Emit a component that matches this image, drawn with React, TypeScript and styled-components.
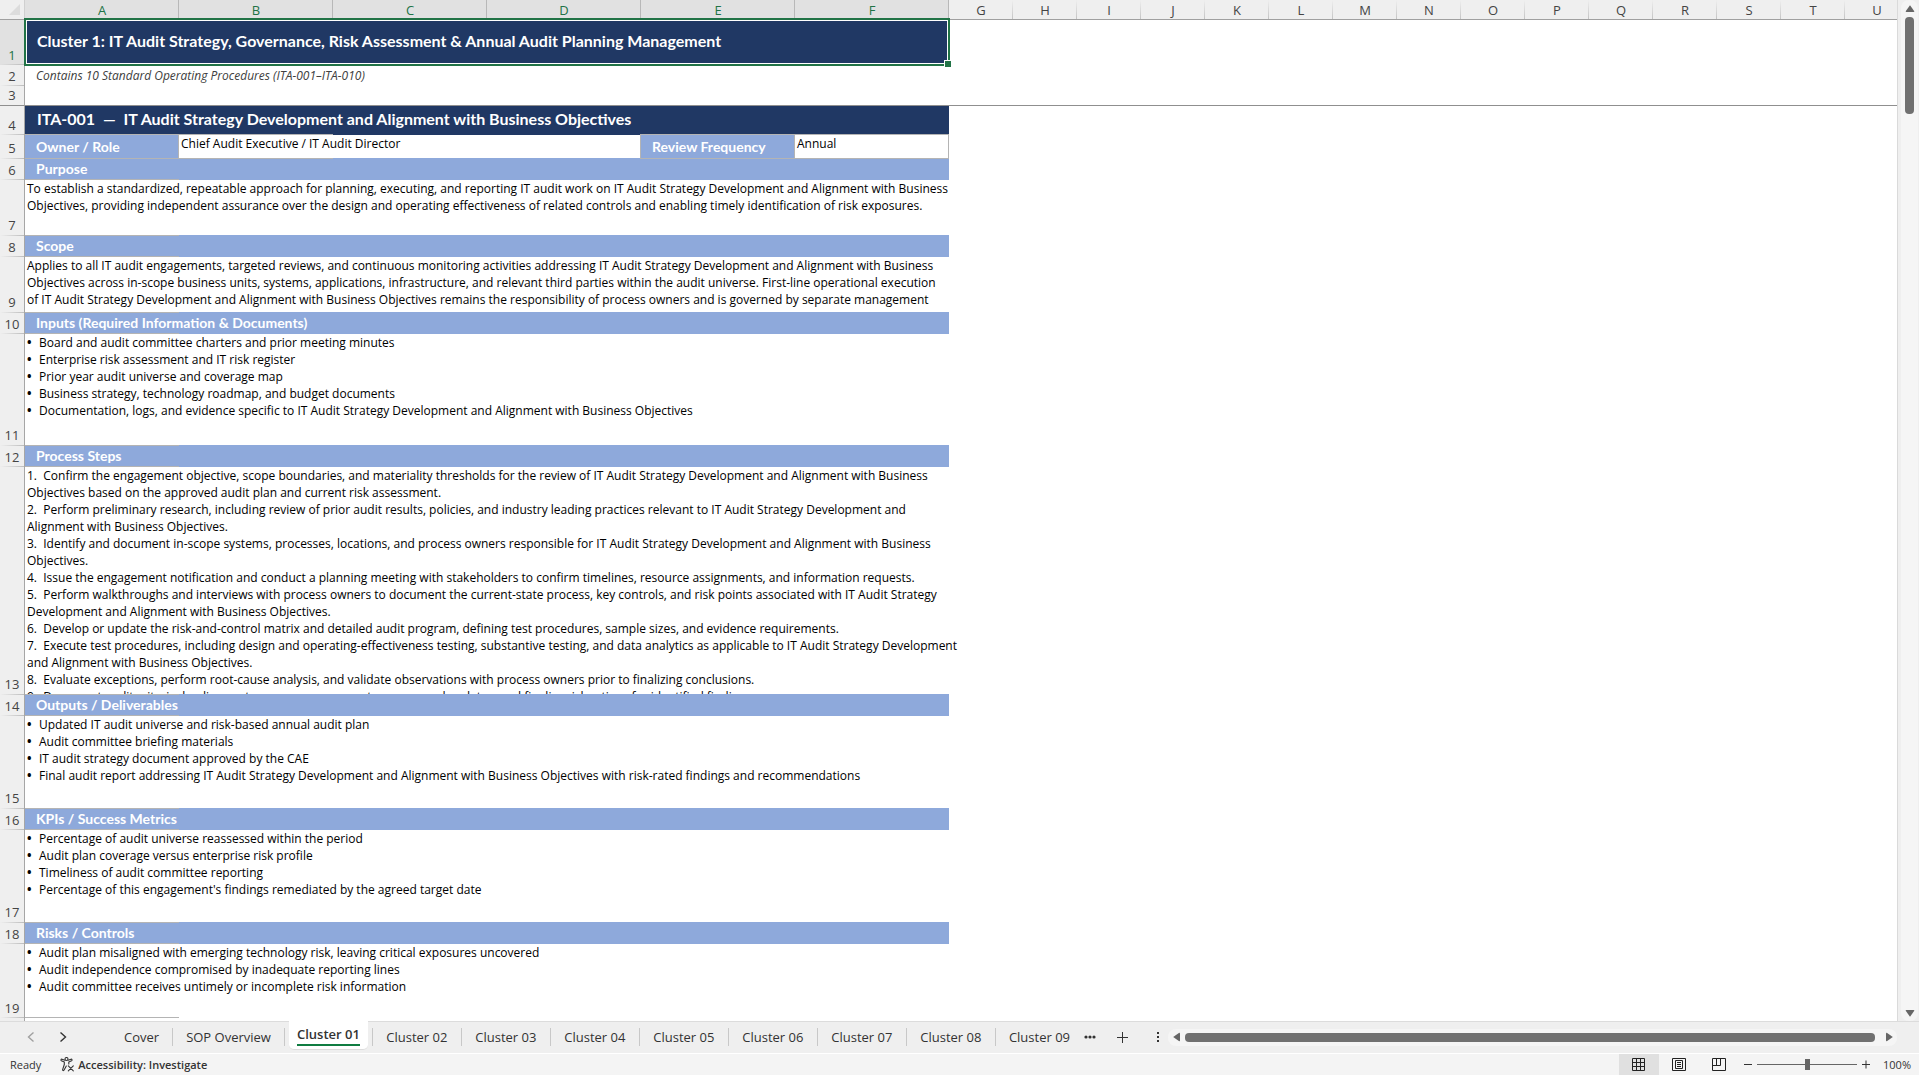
import React, { useState } from 'react';
import styled, { createGlobalStyle, css } from 'styled-components';

const NAVY = '#203864';
const BLUE = '#8ea9db';
const LINE = '#b4b4b4';
const CHROME = '#efefef';
const GREEN = '#217346';
const HEADING_FONT = 'Lato, "Open Sans", sans-serif';
const BODY_FONT = '"Open Sans", "Noto Sans", sans-serif';

const Global = createGlobalStyle`
  * { box-sizing: border-box; }
  body { margin: 0; background: ${CHROME}; font-family: ${BODY_FONT}; overflow: hidden; }
  button { border: 0; margin: 0; padding: 0; background: none; font: inherit; color: inherit; cursor: pointer; }
`;

const Window = styled.div`
  display: flex;
  flex-direction: column;
  height: 100vh;
`;

const Workspace = styled.main`
  display: flex;
  flex: 1;
  min-height: 0;
`;

const SheetView = styled.div`
  flex: 1;
  min-width: 0;
  overflow: hidden;
  background: #fff;
`;

/* ---------- grid ---------- */

const Grid = styled.table`
  width: 1909px;
  table-layout: fixed;
  border-collapse: separate;
  border-spacing: 0;
  font-size: 12px;
  line-height: 17px;
  color: #000;
  th, td { padding: 0; }
`;

const Col = styled.col<{ $w: number }>`
  width: ${(p) => p.$w}px;
`;

const Row = styled.tr<{ $h: number }>`
  height: ${(p) => p.$h}px;
`;

const Corner = styled.td`
  height: 20px;
  background: ${CHROME};
  border-right: 1px solid #d0d0d0;
  border-bottom: 1px solid #a0a0a0;
  svg { display: block; margin-left: 9px; }
`;

const ColHead = styled.th<{ $on: boolean }>`
  height: 20px;
  padding-top: 2px !important;
  font-weight: 400;
  font-size: 13px;
  line-height: 17px;
  text-align: center;
  color: ${(p) => (p.$on ? GREEN : '#444')};
  background: ${(p) => (p.$on
    ? 'linear-gradient(#b8b8b8, #b8b8b8) right / 1px 100% no-repeat #e1e1e1'
    : `linear-gradient(${CHROME}, #c4c4c4) right / 1px 100% no-repeat ${CHROME}`)};
  border-bottom: 1px solid #a0a0a0;
`;

const fade = 'linear-gradient(to right, transparent, #bdbdbd)';

const RowHead = styled.th<{ $on?: boolean; $top?: boolean; $bottom?: boolean; $frozen?: boolean }>`
  padding-bottom: 1px !important;
  vertical-align: bottom;
  text-align: center;
  font-weight: 400;
  font-size: 13px;
  color: ${(p) => (p.$on ? GREEN : '#444')};
  background-color: ${(p) => (p.$on ? '#e1e1e1' : CHROME)};
  background-image: ${(p) => (p.$top ? fade : 'none')}, ${(p) => (p.$bottom ? fade : 'none')};
  background-position: top, bottom;
  background-size: 100% 1px;
  background-repeat: no-repeat;
  border-right: 1px solid #a6a6a6;
  ${(p) => p.$frozen && css`border-bottom: 1px solid #8f8f8f;`}
`;

const Title = styled.td`
  position: relative;
  padding: 0 0 3px 12px !important;
  background: ${NAVY};
  color: #fff;
  font: 700 16px/20px ${HEADING_FONT};
  white-space: pre;
`;

const Selection = styled.span`
  position: absolute;
  inset: -2px -1px -1px;
  border: 2px solid ${GREEN};
  box-shadow: inset 0 0 0 1px #fff;
  pointer-events: none;
  &::after {
    content: '';
    position: absolute;
    right: -3px;
    bottom: -3px;
    width: 6px;
    height: 6px;
    background: ${GREEN};
    border: solid #fff;
    border-width: 1px 0 0 1px;
  }
`;

const Subtitle = styled.td`
  padding-left: 11px !important;
  font-style: italic;
  color: #404040;
`;

const Frozen = styled.td`
  border-bottom: 1px solid #8f8f8f;
`;

const seg = `linear-gradient(${LINE}, ${LINE})`;

const ProcTitle = styled(Title)`
  background:
    ${seg} 0 100% / 308px 1px no-repeat,
    ${seg} 100% 100% / 309px 1px no-repeat,
    ${NAVY};
`;

const Section = styled.td<{ $wide?: boolean }>`
  padding-left: 11px !important;
  color: #fff;
  font: 700 14px/20px ${HEADING_FONT};
  background:
    ${seg} 0 0 / ${(p) => (p.$wide ? 308 : 154)}px 1px no-repeat,
    ${seg} 100% 0 / ${(p) => (p.$wide ? 309 : 0)}px 1px no-repeat,
    ${seg} 0 100% / 154px 1px no-repeat,
    ${BLUE};
`;

const Field = styled.td`
  padding-left: 11px !important;
  color: #fff;
  font: 700 14px/20px ${HEADING_FONT};
  background: ${BLUE};
  border-right: 1px solid ${LINE};
`;

const Value = styled.td`
  vertical-align: top;
  padding: 0 0 0 2px !important;
  border-right: 1px solid ${LINE};
`;

const TextCell = styled.td<{ $line?: boolean }>`
  vertical-align: top;
  background: ${(p) => (p.$line ? `${seg} 0 100% / 154px 1px no-repeat` : 'none')};
`;

const Text = styled.div<{ $h: number }>`
  height: ${(p) => p.$h}px;
  padding-left: 2px;
  white-space: pre;
  overflow-y: clip;
`;

const Line = styled.div`
  display: flex;
  height: 17px;
`;

const Bullet = styled.span`
  width: 12px;
  font-weight: 700;
`;

type Block = { head: string; h: number; lines: string[] };

const SUBJECT = 'IT Audit Strategy Development and Alignment with Business Objectives';

const BLOCKS: Block[] = [
  { head: 'Purpose', h: 55, lines: [
    'To establish a standardized, repeatable approach for planning, executing, and reporting IT audit work on IT Audit Strategy Development and Alignment with Business',
    'Objectives, providing independent assurance over the design and operating effectiveness of related controls and enabling timely identification of risk exposures.',
  ] },
  { head: 'Scope', h: 55, lines: [
    'Applies to all IT audit engagements, targeted reviews, and continuous monitoring activities addressing IT Audit Strategy Development and Alignment with Business',
    'Objectives across in-scope business units, systems, applications, infrastructure, and relevant third parties within the audit universe. First-line operational execution',
    `of ${SUBJECT} remains the responsibility of process owners and is governed by separate management`,
  ] },
  { head: 'Inputs (Required Information & Documents)', h: 111, lines: [
    '• Board and audit committee charters and prior meeting minutes',
    '• Enterprise risk assessment and IT risk register',
    '• Prior year audit universe and coverage map',
    '• Business strategy, technology roadmap, and budget documents',
    `• Documentation, logs, and evidence specific to ${SUBJECT}`,
  ] },
  { head: 'Process Steps', h: 227, lines: [
    '1.  Confirm the engagement objective, scope boundaries, and materiality thresholds for the review of IT Audit Strategy Development and Alignment with Business',
    'Objectives based on the approved audit plan and current risk assessment.',
    '2.  Perform preliminary research, including review of prior audit results, policies, and industry leading practices relevant to IT Audit Strategy Development and',
    'Alignment with Business Objectives.',
    '3.  Identify and document in-scope systems, processes, locations, and process owners responsible for IT Audit Strategy Development and Alignment with Business',
    'Objectives.',
    '4.  Issue the engagement notification and conduct a planning meeting with stakeholders to confirm timelines, resource assignments, and information requests.',
    '5.  Perform walkthroughs and interviews with process owners to document the current-state process, key controls, and risk points associated with IT Audit Strategy',
    'Development and Alignment with Business Objectives.',
    '6.  Develop or update the risk-and-control matrix and detailed audit program, defining test procedures, sample sizes, and evidence requirements.',
    '7.  Execute test procedures, including design and operating-effectiveness testing, substantive testing, and data analytics as applicable to IT Audit Strategy Development',
    'and Alignment with Business Objectives.',
    '8.  Evaluate exceptions, perform root-cause analysis, and validate observations with process owners prior to finalizing conclusions.',
    '9.  Document audit criteria, leading root causes, management responses, due dates, and finalize risk ratings for identified findings.',
  ] },
  { head: 'Outputs / Deliverables', h: 92, lines: [
    '• Updated IT audit universe and risk-based annual audit plan',
    '• Audit committee briefing materials',
    '• IT audit strategy document approved by the CAE',
    `• Final audit report addressing ${SUBJECT} with risk-rated findings and recommendations`,
  ] },
  { head: 'KPIs / Success Metrics', h: 92, lines: [
    '• Percentage of audit universe reassessed within the period',
    '• Audit plan coverage versus enterprise risk profile',
    '• Timeliness of audit committee reporting',
    "• Percentage of this engagement's findings remediated by the agreed target date",
  ] },
  { head: 'Risks / Controls', h: 74, lines: [
    '• Audit plan misaligned with emerging technology risk, leaving critical exposures uncovered',
    '• Audit independence compromised by inadequate reporting lines',
    '• Audit committee receives untimely or incomplete risk information',
  ] },
];

const LETTERS = 'ABCDEFGHIJKLMNOPQRSTU'.split('');
const EMPTY = LETTERS.length - 6;

function Sheet() {
  return (
    <Grid>
      <colgroup>
        <Col $w={25} />
        {LETTERS.map((l, i) => <Col key={l} $w={i < 6 ? 154 : 64} />)}
      </colgroup>
      <thead>
        <tr>
          <Corner>
            <svg width="12" height="12" viewBox="0 0 12 12"><path d="M11 0v11H0z" fill="#dcdcdc" /></svg>
          </Corner>
          {LETTERS.map((l, i) => <ColHead key={l} scope="col" $on={i < 6}>{l}</ColHead>)}
        </tr>
      </thead>
      <tbody>
        <Row $h={45}>
          <RowHead scope="row" $on $bottom>1</RowHead>
          <Title colSpan={6}>
            Cluster 1: IT Audit Strategy, Governance, Risk Assessment &amp; Annual Audit Planning Management
            <Selection />
          </Title>
          <td colSpan={EMPTY} />
        </Row>
        <Row $h={21}>
          <RowHead scope="row" $bottom>2</RowHead>
          <Subtitle colSpan={6}>Contains 10 Standard Operating Procedures (ITA-001–ITA-010)</Subtitle>
          <td colSpan={EMPTY} />
        </Row>
        <Row $h={20}>
          <RowHead scope="row" $frozen>3</RowHead>
          <Frozen colSpan={LETTERS.length} />
        </Row>
        <Row $h={29}>
          <RowHead scope="row" $bottom>4</RowHead>
          <ProcTitle colSpan={6}>{`ITA-001  —  ${SUBJECT}`}</ProcTitle>
          <td colSpan={EMPTY} />
        </Row>
        <Row $h={23}>
          <RowHead scope="row">5</RowHead>
          <Field>Owner / Role</Field>
          <Value colSpan={3}>Chief Audit Executive / IT Audit Director</Value>
          <Field>Review Frequency</Field>
          <Value>Annual</Value>
          <td colSpan={EMPTY} />
        </Row>
        {BLOCKS.map((b, i) => (
          <React.Fragment key={b.head}>
            <Row $h={22}>
              <RowHead scope="row" $top $bottom>{6 + i * 2}</RowHead>
              <Section colSpan={6} $wide={i === 0}>{b.head}</Section>
              <td colSpan={EMPTY} />
            </Row>
            <Row $h={b.h}>
              <RowHead scope="row" $bottom={i === BLOCKS.length - 1}>{7 + i * 2}</RowHead>
              <TextCell colSpan={6} $line={i === BLOCKS.length - 1}>
                <Text $h={b.h}>
                  {b.lines.map((line) => (line.startsWith('• ')
                    ? <Line key={line}><Bullet>•</Bullet>{line.slice(2)}</Line>
                    : <Line key={line}>{line}</Line>))}
                </Text>
              </TextCell>
              <td colSpan={EMPTY} />
            </Row>
          </React.Fragment>
        ))}
        <Row $h={17}>
          <RowHead scope="row">20</RowHead>
          <td colSpan={LETTERS.length} />
        </Row>
      </tbody>
    </Grid>
  );
}

/* ---------- scrollbars ---------- */

const VGutter = styled.div`
  display: flex;
  width: 22px;
  padding: 0 2px 0 3px;
  background: ${CHROME};
  border-left: 1px solid #dadada;
`;

const VTrack = styled.div`
  display: flex;
  flex-direction: column;
  align-items: center;
  flex: 1;
  background: #f5f5f5;
  border-radius: 8px;
`;

const VThumb = styled.div`
  width: 9px;
  height: 97px;
  margin-bottom: auto;
  border-radius: 4px;
  background: #707070;
`;

const ArrowButton = styled.button`
  display: flex;
  align-items: center;
  justify-content: center;
  width: 17px;
  height: 17px;
  flex: none;
`;

const HTrack = styled.div`
  display: flex;
  align-items: center;
  flex: 1;
  height: 17px;
  margin-right: 22px;
  border-radius: 8px;
  background: #f5f5f5;
`;

const HThumb = styled.div`
  flex: 1;
  height: 9px;
  margin-right: 5px;
  border-radius: 4px;
  background: #707070;
`;

const ARROWS = {
  up: 'M5 1.2 9.3 7.2Q9.4 8 8.6 8H1.4Q.6 8 .7 7.2Z',
  down: 'M5 8.8.7 2.8Q.6 2 1.4 2h7.2q.8 0 .7.8Z',
  left: 'M1.2 5 7.2.7Q8 .6 8 1.4v7.2q0 .8-.8.7Z',
  right: 'M8.8 5 2.8.7Q2 .6 2 1.4v7.2q0 .8.8.7Z',
};

function Arrow({ to }: { to: keyof typeof ARROWS }) {
  return (
    <ArrowButton aria-label={`Scroll ${to}`}>
      <svg width="10" height="10" viewBox="0 0 10 10"><path d={ARROWS[to]} fill="#666" /></svg>
    </ArrowButton>
  );
}

/* ---------- sheet tabs ---------- */

const TabBar = styled.nav`
  display: flex;
  align-items: center;
  height: 33px;
  flex: none;
  padding-bottom: 1px;
  border-top: 1px solid #dcdcdc;
  border-bottom: 1px solid #fff;
  background: ${CHROME};
  color: #333;
  font-size: 13px;
  line-height: 20px;
`;

const NavButton = styled.button`
  display: flex;
  align-items: center;
  justify-content: center;
  width: 32px;
  height: 20px;
`;

const NavGroup = styled.div`
  display: flex;
  padding: 0 32px 0 15px;
`;

const Tabs = styled.div`
  display: flex;
  align-self: stretch;
`;

const TabButton = styled.button<{ $wide: boolean; $rule: boolean }>`
  align-self: center;
  height: 18px;
  min-width: ${(p) => (p.$wide ? 89 : 0)}px;
  padding: 0 13px;
  line-height: 16px;
  white-space: nowrap;
  border-right: 1px solid ${(p) => (p.$rule ? '#c8c8c8' : 'transparent')};
`;

const ActiveSlot = styled.div`
  display: flex;
  align-items: flex-start;
  margin-top: -1px;
  padding: 0 4px;
`;

const ActiveTab = styled.button`
  height: 29px;
  padding: 3px 8px 4px;
  background: #fff;
  border: solid #dcdcdc;
  border-width: 0 0 1px;
  border-radius: 0 0 5px 5px;
  span {
    display: block;
    font-weight: 600;
    font-size: 13px;
    line-height: 20px;
    border-bottom: 2px solid #107c41;
  }
`;

const SlotRule = styled.i`
  align-self: center;
  width: 1px;
  height: 18px;
  background: #c8c8c8;
`;

const ToolButton = styled.button<{ $w: number }>`
  display: flex;
  align-items: center;
  justify-content: center;
  width: ${(p) => p.$w}px;
  height: 20px;
  flex: none;
`;

const TABS = ['Cover', 'SOP Overview', 'Cluster 01', 'Cluster 02', 'Cluster 03', 'Cluster 04',
  'Cluster 05', 'Cluster 06', 'Cluster 07', 'Cluster 08', 'Cluster 09'];

function SheetTabs() {
  return (
    <TabBar aria-label="Sheets">
      <NavGroup>
        <NavButton aria-label="Previous sheet">
          <svg width="12" height="12" viewBox="0 0 12 12" fill="none" stroke="#a0a0a0" strokeWidth="1.4"><path d="M8.5 1.5 3.5 6l5 4.5" /></svg>
        </NavButton>
        <NavButton aria-label="Next sheet">
          <svg width="12" height="12" viewBox="0 0 12 12" fill="none" stroke="#333" strokeWidth="1.4"><path d="M3.5 1.5 8.5 6l-5 4.5" /></svg>
        </NavButton>
      </NavGroup>
      <Tabs>
        {TABS.map((t, i) => (t === 'Cluster 01' ? (
          <React.Fragment key={t}>
            <ActiveSlot><ActiveTab aria-current="page"><span>{t}</span></ActiveTab></ActiveSlot>
            <SlotRule />
          </React.Fragment>
        ) : (
          <TabButton key={t} $wide={i > 2 && i < TABS.length - 1} $rule={i < TABS.length - 1}>{t}</TabButton>
        )))}
      </Tabs>
      <ToolButton $w={12} aria-label="More sheets">
        <svg width="12" height="4" viewBox="0 0 12 4" fill="#333"><circle cx="2" cy="2" r="1.6" /><circle cx="6" cy="2" r="1.6" /><circle cx="10" cy="2" r="1.6" /></svg>
      </ToolButton>
      <ToolButton $w={52} aria-label="New sheet">
        <svg width="11" height="11" viewBox="0 0 11 11" stroke="#333" strokeWidth="1"><path d="M5.5 0v11M0 5.5h11" /></svg>
      </ToolButton>
      <ToolButton $w={20} aria-label="Resize tab area">
        <svg width="2" height="10" viewBox="0 0 2 10" fill="#333"><path d="M0 0h2v2H0zM0 4h2v2H0zM0 8h2v2H0z" /></svg>
      </ToolButton>
      <HTrack>
        <Arrow to="left" />
        <HThumb />
        <Arrow to="right" />
      </HTrack>
    </TabBar>
  );
}

/* ---------- status bar ---------- */

const StatusBar = styled.footer`
  display: flex;
  align-items: center;
  height: 21px;
  flex: none;
  padding: 0 8px 0 10px;
  background: #f4f4f4;
  color: #333;
  font-size: 11px;
  line-height: 20px;
`;

const A11yButton = styled.button`
  display: flex;
  align-items: center;
  gap: 3px;
  margin: 0 auto 0 19px;
  font-weight: 600;
`;

const ViewButton = styled.button<{ $on?: boolean }>`
  display: flex;
  align-items: center;
  justify-content: center;
  width: 40px;
  height: 21px;
  background: ${(p) => (p.$on ? '#e0e0e0' : 'none')};
`;

const ZoomGroup = styled.div`
  display: flex;
  align-items: center;
  gap: 5px;
  margin: 0 13px 0 5px;
`;

const ZoomStep = styled.button`
  display: flex;
  width: 8px;
  height: 12px;
  align-items: center;
`;

const ZoomSlider = styled.input`
  appearance: none;
  width: 100px;
  height: 12px;
  margin: 0;
  background: linear-gradient(#666, #666) center / 100% 1px no-repeat;
  &::-webkit-slider-thumb {
    appearance: none;
    width: 5px;
    height: 11px;
    background: #666;
  }
`;

function Status() {
  const [zoom, setZoom] = useState(100);
  return (
    <StatusBar>
      <span>Ready</span>
      <A11yButton>
        <svg width="15" height="15" viewBox="0 0 15 15" fill="none" stroke="#333" strokeWidth="1.1" strokeLinejoin="round" strokeLinecap="round">
          <circle cx="6.5" cy="2" r="1.5" />
          <path d="M5 3.2 2 2.2C1 2 .5 3.2 1.4 3.7L4.3 5v2.5L2.6 12.6c-.2 1 1 1.4 1.5.5L6.3 9" />
          <path d="M8 3.2l3-1c1-.2 1.5 1 .6 1.5L8.8 5v2M8.3 8.8l5 5M13.3 8.8l-5 5" />
        </svg>
        Accessibility: Investigate
      </A11yButton>
      <ViewButton $on aria-label="Normal view">
        <svg width="14" height="14" viewBox="0 0 14 14" fill="none" stroke="#222"><path d="M.5.5h12v12H.5zM4.5.5v12M8.5.5v12M.5 4.5h12M.5 8.5h12" /></svg>
      </ViewButton>
      <ViewButton aria-label="Page layout view">
        <svg width="14" height="14" viewBox="0 0 14 14" fill="none" stroke="#222"><path d="M.5.5h13v12H.5zM3.5 2.5h7v8h-7zM5 4.5h4M5 6.5h4M5 8.5h4" /></svg>
      </ViewButton>
      <ViewButton aria-label="Page break preview">
        <svg width="14" height="14" viewBox="0 0 14 14" fill="none" stroke="#222"><path d="M.5.5h13v12H.5zM4.5.5v7M.5 7.5h8v-7" /></svg>
      </ViewButton>
      <ZoomGroup>
        <ZoomStep aria-label="Zoom out" onClick={() => setZoom(Math.max(10, zoom - 10))}>
          <svg width="8" height="9" viewBox="0 0 8 9" stroke="#333"><path d="M0 4.5h8" /></svg>
        </ZoomStep>
        <ZoomSlider type="range" aria-label="Zoom" min={10} max={190} value={zoom} onChange={(e) => setZoom(Number(e.target.value))} />
        <ZoomStep aria-label="Zoom in" onClick={() => setZoom(Math.min(190, zoom + 10))}>
          <svg width="8" height="9" viewBox="0 0 8 9" stroke="#333"><path d="M0 4.5h8M4 .5v8" /></svg>
        </ZoomStep>
      </ZoomGroup>
      <span>{zoom}%</span>
    </StatusBar>
  );
}

export default function App() {
  return (
    <Window>
      <Global />
      <Workspace>
        <SheetView><Sheet /></SheetView>
        <VGutter>
          <VTrack>
            <Arrow to="up" />
            <VThumb />
            <Arrow to="down" />
          </VTrack>
        </VGutter>
      </Workspace>
      <SheetTabs />
      <Status />
    </Window>
  );
}
